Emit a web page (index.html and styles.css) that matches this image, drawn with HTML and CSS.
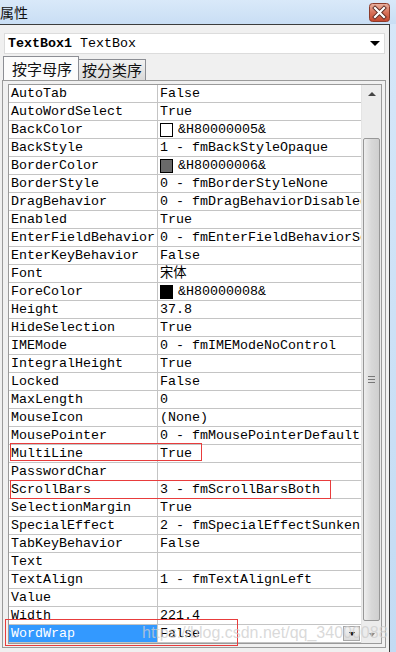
FILE: index.html
```html
<!DOCTYPE html>
<html lang="zh-CN">
<head>
    <meta charset="UTF-8" />
    <meta name="viewport" content="width=device-width, initial-scale=1.0" />
    <title>属性</title>
    <link rel="stylesheet" href="styles.css">
</head>
<body>
    <div class="titlebar">
        <span class="title">属性</span>
        <span class="close">
            <svg width="21" height="19" viewBox="0 0 21 19">
                <defs>
                    <linearGradient id="cg" x1="0" y1="0" x2="0" y2="1">
                        <stop offset="0" stop-color="#eab3a2"/>
                        <stop offset="0.5" stop-color="#d7725a"/>
                        <stop offset="1" stop-color="#c4452c"/>
                    </linearGradient>
                </defs>
                <rect x="0.5" y="0.5" width="20" height="18" rx="3" fill="url(#cg)" stroke="#8c3b2a"/>
                <path d="M6 5 L15 14 M15 5 L6 14" stroke="#5a2a22" stroke-width="4" stroke-linecap="square"/>
                <path d="M6 5 L15 14 M15 5 L6 14" stroke="#fff" stroke-width="2.2" stroke-linecap="square"/>
            </svg>
        </span>
    </div>

    <div class="frame">
        <div class="panel">
            <div class="combo">
                <span><b>TextBox1</b> TextBox</span>
                <span class="tri-down"></span>
            </div>

            <div class="tabs">
                <div class="tab active">按字母序</div>
                <div class="tab">按分类序</div>
            </div>

            <div class="grid-box">
                <div class="grid-inner">
                    <div class="list">
                        <div class="row"><div class="name">AutoTab</div><div class="value">False</div></div>
                        <div class="row"><div class="name">AutoWordSelect</div><div class="value">True</div></div>
                        <div class="row"><div class="name">BackColor</div><div class="value"><span class="swatch white"></span>&amp;H80000005&amp;</div></div>
                        <div class="row"><div class="name">BackStyle</div><div class="value">1 - fmBackStyleOpaque</div></div>
                        <div class="row"><div class="name">BorderColor</div><div class="value"><span class="swatch gray"></span>&amp;H80000006&amp;</div></div>
                        <div class="row"><div class="name">BorderStyle</div><div class="value">0 - fmBorderStyleNone</div></div>
                        <div class="row"><div class="name">DragBehavior</div><div class="value">0 - fmDragBehaviorDisabled</div></div>
                        <div class="row"><div class="name">Enabled</div><div class="value">True</div></div>
                        <div class="row"><div class="name">EnterFieldBehavior</div><div class="value">0 - fmEnterFieldBehaviorSelectAll</div></div>
                        <div class="row"><div class="name">EnterKeyBehavior</div><div class="value">False</div></div>
                        <div class="row"><div class="name">Font</div><div class="value">宋体</div></div>
                        <div class="row"><div class="name">ForeColor</div><div class="value"><span class="swatch black"></span>&amp;H80000008&amp;</div></div>
                        <div class="row"><div class="name">Height</div><div class="value">37.8</div></div>
                        <div class="row"><div class="name">HideSelection</div><div class="value">True</div></div>
                        <div class="row"><div class="name">IMEMode</div><div class="value">0 - fmIMEModeNoControl</div></div>
                        <div class="row"><div class="name">IntegralHeight</div><div class="value">True</div></div>
                        <div class="row"><div class="name">Locked</div><div class="value">False</div></div>
                        <div class="row"><div class="name">MaxLength</div><div class="value">0</div></div>
                        <div class="row"><div class="name">MouseIcon</div><div class="value">(None)</div></div>
                        <div class="row"><div class="name">MousePointer</div><div class="value">0 - fmMousePointerDefault</div></div>
                        <div class="row"><div class="name">MultiLine</div><div class="value">True</div></div>
                        <div class="row"><div class="name">PasswordChar</div><div class="value"></div></div>
                        <div class="row"><div class="name">ScrollBars</div><div class="value">3 - fmScrollBarsBoth</div></div>
                        <div class="row"><div class="name">SelectionMargin</div><div class="value">True</div></div>
                        <div class="row"><div class="name">SpecialEffect</div><div class="value">2 - fmSpecialEffectSunken</div></div>
                        <div class="row"><div class="name">TabKeyBehavior</div><div class="value">False</div></div>
                        <div class="row"><div class="name">Text</div><div class="value"></div></div>
                        <div class="row"><div class="name">TextAlign</div><div class="value">1 - fmTextAlignLeft</div></div>
                        <div class="row"><div class="name">Value</div><div class="value"></div></div>
                        <div class="row"><div class="name">Width</div><div class="value">221.4</div></div>
                        <div class="row selected"><div class="name">WordWrap</div><div class="value">False<span class="drop-btn"><span class="tri-small"></span></span></div></div>
                    </div>

                    <div class="vscroll">
                        <div class="sb-btn"><span class="tri-up"></span></div>
                        <div class="sb-gap"></div>
                        <div class="thumb"><span class="grip"></span></div>
                        <div class="sb-fill"></div>
                        <div class="sb-btn"><span class="tri-small light"></span></div>
                    </div>
                </div>
            </div>
        </div>
    </div>

    <div class="mark mark-multiline"></div>
    <div class="mark mark-scrollbars"></div>
    <div class="mark mark-wordwrap"></div>
    <div class="watermark">https://blog.csdn.net/qq_34000088</div>
</body>
</html>
```

FILE: styles.css
```css
body {
    margin: 0;
    width: 396px;
    height: 652px;
    overflow: hidden;
    background: linear-gradient(180deg, #d6e7f9, #c3dbf3);
    font-family: "Liberation Mono", "Noto Sans CJK SC", monospace;
    position: relative;
}

.titlebar {
    height: 24px;
    display: flex;
    align-items: center;
    justify-content: space-between;
    background: linear-gradient(180deg, #d9e9f9, #c9def4);
}

.title {
    font-family: "Noto Sans CJK SC", sans-serif;
    font-size: 14px;
    color: #111;
    margin-top: -1px;
}

.close {
    display: flex;
    margin-right: 6px;
    margin-top: 1px;
}

.frame {
    width: 390px;
    height: 628px;
}

.panel {
    width: 390px;
    height: 628px;
    background: #f0f0f0;
    border-top: 1px solid #3c3c3c;
    border-right: 1px solid #3c3c3c;
    padding: 8px 0 0 2px;
    box-sizing: border-box;
}

.combo {
    margin-left: 2px;
    width: 381px;
    height: 21px;
    box-sizing: border-box;
    background: #fff;
    border: 1px solid #dcdcdc;
    display: flex;
    align-items: center;
    justify-content: space-between;
    padding: 0 4px 0 3px;
    font-size: 13.33px;
    color: #000;
}

.combo b {
    font-weight: bold;
}

.tri-down {
    width: 0;
    height: 0;
    border-left: 5px solid transparent;
    border-right: 5px solid transparent;
    border-top: 5px solid #000;
}

.tabs {
    display: flex;
    align-items: flex-end;
    height: 24px;
    margin-top: 2px;
    padding-left: 1px;
}

.tab {
    font-family: "Noto Sans CJK SC", sans-serif;
    font-size: 15px;
    line-height: 20px;
    height: 21px;
    padding: 0 3px;
    box-sizing: border-box;
    border: 1px solid #8c8e94;
    border-bottom: none;
    background: linear-gradient(180deg, #f2f2f2, #d9d9d9);
    color: #111;
}

.tab.active {
    height: 24px;
    line-height: 23px;
    width: 76px;
    padding-left: 8px;
    background: #fcfcfc;
}

.tab + .tab {
    border-left: none;
}

.grid-box {
    width: 384px;
    height: 568px;
    box-sizing: border-box;
    border: 1px solid #9a9a9a;
    padding: 3px 3px 2px 5px;
    background: #f0f0f0;
}

.grid-inner {
    display: flex;
    border: 1px solid #9a9a9a;
    background: #fff;
    height: 560px;
    box-sizing: border-box;
}

.list {
    width: 352px;
}

.row {
    display: flex;
    height: 17px;
    border-bottom: 1px solid #c4c4c4;
    font-size: 13.33px;
    line-height: 17px;
    color: #000;
    white-space: nowrap;
}

.name {
    width: 146px;
    padding-left: 2px;
    border-right: 1px solid #c4c4c4;
    overflow: hidden;
}

.value {
    flex: 1;
    display: flex;
    align-items: center;
    padding-left: 2px;
    overflow: hidden;
}

.swatch {
    width: 11px;
    height: 12px;
    border: 1px solid #000;
    margin-right: 5px;
    flex-shrink: 0;
}

.swatch.white { background: #fff; }
.swatch.gray { background: #696969; }
.swatch.black { background: #000; }

.selected .name {
    background: #3399ff;
    color: #fff;
}

.drop-btn {
    margin-left: auto;
    width: 17px;
    height: 15px;
    box-sizing: border-box;
    border: 1px solid #a8a8a8;
    background: linear-gradient(180deg, #f4f4f4, #dcdcdc);
    display: flex;
    align-items: center;
    justify-content: center;
    margin-right: 1px;
}

.tri-small {
    width: 0;
    height: 0;
    border-left: 3px solid transparent;
    border-right: 3px solid transparent;
    border-top: 4px solid #000;
}

.tri-small.light {
    border-top-color: #8a8a8a;
}

.vscroll {
    width: 20px;
    display: flex;
    flex-direction: column;
    background: #ececec;
    border-left: 1px solid #e4e4e4;
    box-sizing: border-box;
}

.sb-btn {
    height: 17px;
    display: flex;
    align-items: center;
    justify-content: center;
    flex-shrink: 0;
}

.tri-up {
    width: 0;
    height: 0;
    border-left: 4px solid transparent;
    border-right: 4px solid transparent;
    border-bottom: 4px solid #444;
}

.sb-gap {
    height: 36px;
}

.thumb {
    height: 483px;
    margin: 0 1px;
    box-sizing: border-box;
    border: 1px solid #979797;
    border-radius: 2px;
    background: linear-gradient(90deg, #eeeeee, #d8d8d8 50%, #cfcfcf);
    display: flex;
    align-items: center;
    justify-content: center;
}

.grip {
    width: 7px;
    height: 7px;
    background: linear-gradient(180deg, #777 0 1px, transparent 1px 3px, #777 3px 4px, transparent 4px 6px, #777 6px 7px);
}

.sb-fill {
    flex: 1;
}

.mark {
    position: absolute;
    border: 1px solid #e83c3c;
}

.mark-multiline {
    left: 10px;
    top: 443px;
    width: 190px;
    height: 16px;
}

.mark-scrollbars {
    left: 10px;
    top: 480px;
    width: 319px;
    height: 17px;
}

.mark-wordwrap {
    left: 5px;
    top: 619px;
    width: 231px;
    height: 25px;
}

.watermark {
    position: absolute;
    left: 142px;
    top: 622px;
    font-family: "Liberation Sans", sans-serif;
    font-size: 16px;
    line-height: 22px;
    color: rgba(205, 205, 205, 0.75);
    white-space: nowrap;
}
```
